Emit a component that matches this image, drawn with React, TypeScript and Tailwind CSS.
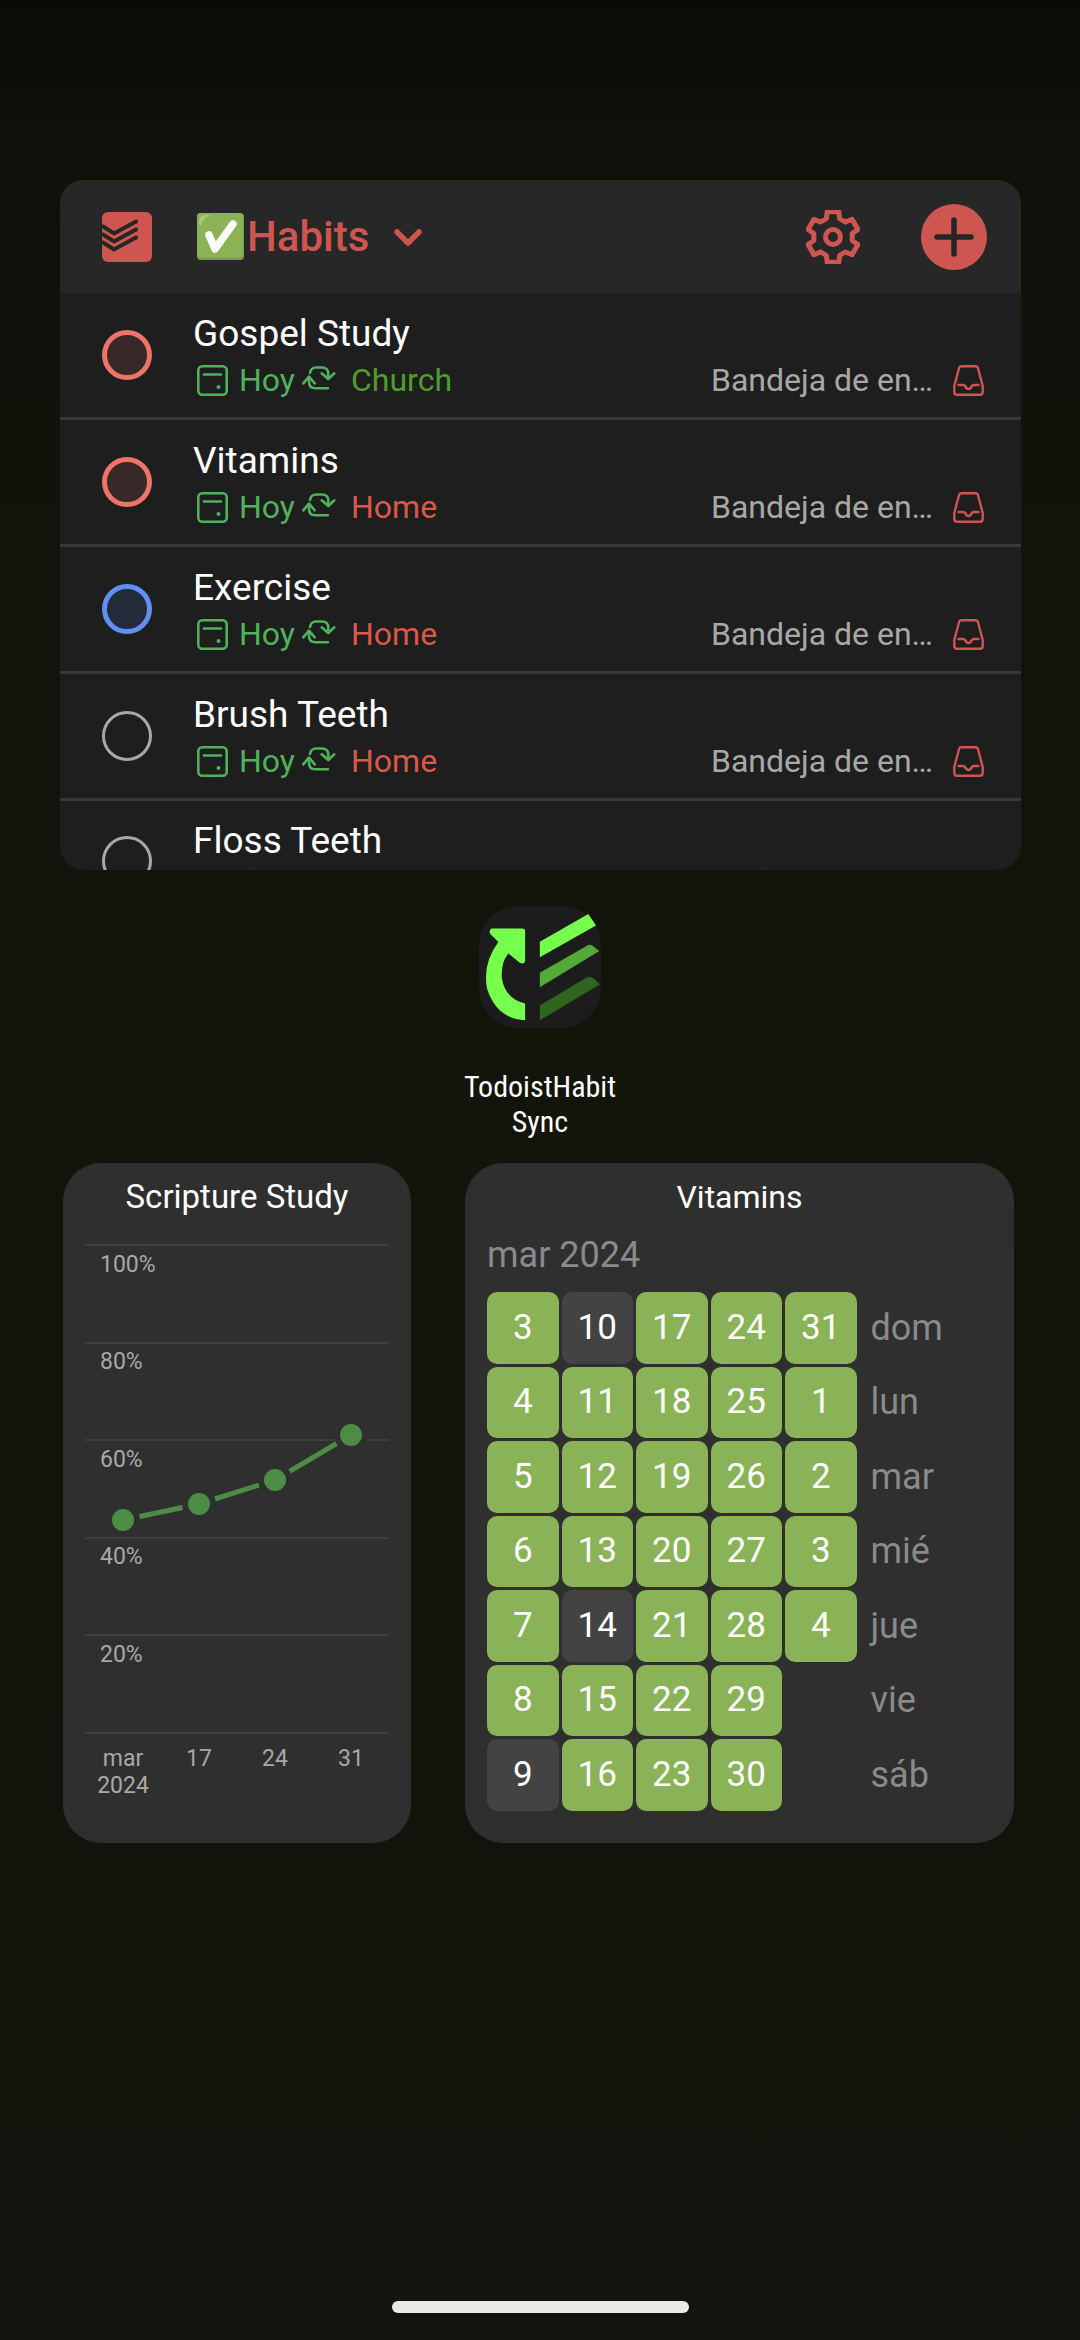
import React from "react";

const RED = "#cf5650";
const GREEN = "#4fb35b";

function gearPath() {
  const cx = 27, cy = 27, out = 26, root = 19.5;
  const pts: string[] = [];
  for (let i = 0; i < 6; i++) {
    const a = -90 + i * 60;
    const p = (ang: number, r: number) => {
      const t = (ang * Math.PI) / 180;
      return `${(cx + r * Math.cos(t)).toFixed(2)} ${(cy + r * Math.sin(t)).toFixed(2)}`;
    };
    pts.push(p(a - 20, root), p(a - 13, out), p(a + 13, out), p(a + 20, root));
  }
  return "M" + pts.join("L") + "Z";
}

function TodoistLogo() {
  return (
    <svg width="50" height="50" viewBox="0 0 50 50" className="shrink-0">
      <rect width="50" height="50" rx="6" fill={RED} />
      <g fill="none" stroke="#262626" strokeWidth="4" strokeLinecap="round">
        <path d="M1 14.5 L12 21.5 L34 9.5" />
        <path d="M1 22.5 L12 29.5 L34 17.5" />
        <path d="M1 30.5 L12 37.5 L34 25.5" />
      </g>
    </svg>
  );
}

function CheckEmoji() {
  return (
    <svg width="47" height="47" viewBox="0 0 47 47" className="shrink-0">
      <rect width="47" height="47" rx="4" fill="#7c9f4c" />
      <rect width="46" height="44.5" rx="4" fill="#8bb356" />
      <path d="M2 9 Q2 2 9 2 H14 Q6 4 3 14 Z" fill="#a9c985" />
      <path d="M12 22 L18 36 L36 11" fill="none" stroke="#fbfbfb" strokeWidth="7.5" strokeLinecap="round" strokeLinejoin="round" />
    </svg>
  );
}

function Gear() {
  return (
    <svg width="54" height="54" viewBox="0 0 54 54">
      <path d={gearPath()} fill="none" stroke={RED} strokeWidth="5" strokeLinejoin="round" />
      <circle cx="27" cy="27" r="7.5" fill="none" stroke={RED} strokeWidth="5" />
    </svg>
  );
}

function Plus() {
  return (
    <svg width="66" height="66" viewBox="0 0 66 66">
      <circle cx="33" cy="33" r="33" fill={RED} />
      <path d="M33 16 V50 M16 33 H50" stroke="#262626" strokeWidth="5.5" strokeLinecap="round" />
    </svg>
  );
}

function CalIcon() {
  return (
    <svg width="31" height="31" viewBox="0 0 31 31" className="shrink-0">
      <rect x="1.3" y="1.3" width="28.4" height="28.4" rx="4" fill="none" stroke={GREEN} strokeWidth="2.6" />
      <path d="M7 9.5 H24" stroke={GREEN} strokeWidth="2.6" strokeLinecap="round" />
      <circle cx="21.5" cy="22" r="2" fill={GREEN} />
    </svg>
  );
}

function RepeatIcon() {
  return (
    <svg width="34" height="25" viewBox="0 0 34 25" className="-mt-[3px] shrink-0">
      <g fill="none" stroke={GREEN} strokeWidth="2.6" strokeLinecap="round" strokeLinejoin="round">
        <path d="M1.3 17.3 L7 10.7 L12.7 17.3" />
        <path d="M7 11 V16 Q7 22.3 13.5 22.3 H26" />
        <path d="M19.7 7.3 L26.3 13 L32.3 7.3" />
        <path d="M8 7 Q9 1.5 14 1.5 H20 Q26.3 1.5 26.3 8 V12.5" />
      </g>
    </svg>
  );
}

function InboxIcon() {
  return (
    <svg width="31" height="31" viewBox="0 0 31 31" className="shrink-0">
      <path d="M8.5 1.3 H22.5 Q24.5 1.3 25 3.3 L29.7 21 V27 Q29.7 29.7 27 29.7 H4 Q1.3 29.7 1.3 27 V21 L6 3.3 Q6.5 1.3 8.5 1.3 Z" fill="none" stroke={RED} strokeWidth="2.4" strokeLinejoin="round" />
      <path d="M5.5 20 H10 Q11.5 20 12.5 21.5 Q13.5 24 15.5 24 Q17.5 24 18.5 21.5 Q19.5 20 21 20 H25.5" fill="none" stroke={RED} strokeWidth="2.4" strokeLinecap="round" />
    </svg>
  );
}

type Task = { name: string; tag: string; tagClass: string; ring: string };

const tasks: Task[] = [
  { name: "Gospel Study", tag: "Church", tagClass: "text-[#4f9e2d]", ring: "border-[#ee7368] border-[5px] bg-[#382828]" },
  { name: "Vitamins", tag: "Home", tagClass: "text-[#d9584a]", ring: "border-[#ee7368] border-[5px] bg-[#382828]" },
  { name: "Exercise", tag: "Home", tagClass: "text-[#d9584a]", ring: "border-[#5f90f2] border-[5px] bg-[#232b3a]" },
  { name: "Brush Teeth", tag: "Home", tagClass: "text-[#d9584a]", ring: "border-[#a8a8a8] border-[3px]" },
];

function TaskRow({ task }: { task: Task }) {
  return (
    <div className="flex h-[127px] shrink-0 items-center border-b-[3px] border-[#383838] pl-[42px] pr-[37px]">
      <div className={`h-[50px] w-[50px] shrink-0 rounded-full ${task.ring}`} />
      <div className="ml-[41px] flex min-w-0 flex-1 flex-col pt-[2px]">
        <div className="text-[37px] leading-[44px] text-white">{task.name}</div>
        <div className="mt-[4px] flex h-[40px] items-center text-[32px] leading-[40px]">
          <span className="ml-[4px]"><CalIcon /></span>
          <span className="ml-[11px] text-[#4fb35b]">Hoy</span>
          <span className="ml-[7px] flex items-center"><RepeatIcon /></span>
          <span className={`ml-[15px] ${task.tagClass}`}>{task.tag}</span>
          <span className="ml-auto text-[#a8a8a8]">Bandeja de en…</span>
          <span className="ml-[20px]"><InboxIcon /></span>
        </div>
      </div>
    </div>
  );
}

function TasksWidget() {
  return (
    <div className="ml-[60px] flex h-[690px] w-[961px] flex-col overflow-hidden rounded-[24px] bg-[#1e1e1e]">
      <div className="flex h-[113px] shrink-0 items-center bg-[#272727] pl-[42px] pr-[34px]">
        <TodoistLogo />
        <div className="ml-[45px]"><CheckEmoji /></div>
        <span className="ml-[3px] text-[42px] font-medium leading-[48px] text-[#cf5650]">Habits</span>
        <svg width="28" height="18" viewBox="0 0 28 18" className="ml-[25px] mt-[2px]">
          <path d="M3 3 L14 14 L25 3" fill="none" stroke={RED} strokeWidth="5.5" strokeLinecap="round" strokeLinejoin="round" />
        </svg>
        <div className="ml-auto"><Gear /></div>
        <div className="ml-[61px]"><Plus /></div>
      </div>
      {tasks.map((t) => <TaskRow key={t.name} task={t} />)}
      <div className="flex shrink-0 items-start pl-[42px] pt-[18px]">
        <div className="mt-[17px] h-[50px] w-[50px] shrink-0 rounded-full border-[3px] border-[#a8a8a8]" />
        <div className="ml-[41px] text-[37px] leading-[44px] text-white">Floss Teeth</div>
      </div>
    </div>
  );
}

function AppIcon() {
  return (
    <div className="mt-[36px] flex flex-col items-center">
      <svg width="122" height="122" viewBox="118 48 365 365">
        <rect x="118" y="48" width="365" height="365" rx="115" fill="#1c1c1c" />
        <path d="M156 115 H248 Q256 115 256 123 V212 Q254 224 240 218 L206 190 Q184 215 186 262 Q195 325 256 340 V390 Q170 385 142 295 Q128 220 176 156 L152 132 Q146 120 156 115 Z" fill="#76ff4d" />
        <path d="M300 155 L445 72 L468 106 L300 201 Z" fill="#76ff4d" />
        <path d="M300 248 L445 165 Q450 162 458 167 L478 183 L300 291 Z" fill="#52ab38" />
        <path d="M300 346 L440 262 Q448 258 458 263 L480 282 L300 390 Z" fill="#2f661e" />
      </svg>
      <div className="mt-[41px] w-[220px] text-center text-[30px] leading-[35px] text-white [font-stretch:75%]">
        TodoistHabit<br />Sync
      </div>
    </div>
  );
}

const pts: [number, number][] = [[123, 1520], [199, 1504], [275, 1480], [351, 1435]];

function ChartCard() {
  return (
    <div className="ml-[63px] flex h-[680px] w-[348px] flex-col rounded-[38px] bg-[#2f2f2f]">
      <div className="mt-[14px] text-center text-[33px] leading-[40px] text-white">Scripture Study</div>
      <svg width="348" height="610" viewBox="63 1225 348 610" className="mt-[8px]" fontFamily="Roboto, sans-serif" fontSize="23" fill="#a8a8a8">
        {[1245, 1343, 1440, 1538, 1635, 1733].map((y) => (
          <line key={y} x1="85" x2="389" y1={y} y2={y} stroke="#3e3e3e" strokeWidth="2" />
        ))}
        {[["100%", 1272], ["80%", 1369], ["60%", 1467], ["40%", 1564], ["20%", 1662]].map(([t, y]) => (
          <text key={t} x="100" y={y}>{t}</text>
        ))}
        <polyline points={pts.map((p) => p.join(",")).join(" ")} fill="none" stroke="#4c8c44" strokeWidth="5" />
        {pts.map(([x, y]) => <circle key={x} cx={x} cy={y} r="17" fill="#2f2f2f" />)}
        {pts.map(([x, y]) => <circle key={x} cx={x} cy={y} r="11" fill="#4c8c44" />)}
        <g textAnchor="middle">
          <text x="123" y="1766">mar</text>
          <text x="123" y="1793">2024</text>
          <text x="199" y="1766">17</text>
          <text x="275" y="1766">24</text>
          <text x="351" y="1766">31</text>
        </g>
      </svg>
    </div>
  );
}

const rows: { label: string; days: (number | null)[]; off: number[] }[] = [
  { label: "dom", days: [3, 10, 17, 24, 31], off: [10] },
  { label: "lun", days: [4, 11, 18, 25, 1], off: [] },
  { label: "mar", days: [5, 12, 19, 26, 2], off: [] },
  { label: "mié", days: [6, 13, 20, 27, 3], off: [] },
  { label: "jue", days: [7, 14, 21, 28, 4], off: [14] },
  { label: "vie", days: [8, 15, 22, 29, null], off: [] },
  { label: "sáb", days: [9, 16, 23, 30, null], off: [9] },
];

function CalendarCard() {
  return (
    <div className="ml-[54px] flex h-[680px] w-[549px] flex-col rounded-[38px] bg-[#2f2f2f] pl-[22px]">
      <div className="-ml-[22px] mt-[14px] text-center text-[32px] leading-[40px] text-white">Vitamins</div>
      <div className="mt-[16px] text-[36px] leading-[44px] text-[#8a8a8a]">mar 2024</div>
      <div className="mt-[15px] grid grid-cols-[repeat(5,71.5px)_auto] gap-[3px]">
        {rows.map((r) => (
          <React.Fragment key={r.label}>
            {r.days.map((d, i) =>
              d === null ? (
                <div key={i} />
              ) : (
                <div
                  key={i}
                  className={`flex h-[71.5px] items-center justify-center rounded-[10px] text-[35px] text-white ${r.off.includes(d) ? "bg-[#434343]" : "bg-[#8ab357]"}`}
                >
                  {d}
                </div>
              )
            )}
            <div className="flex items-center pl-[11px] text-[36px] text-[#8a8a8a]">{r.label}</div>
          </React.Fragment>
        ))}
      </div>
    </div>
  );
}

export default function App() {
  return (
    <div className="flex h-[2340px] w-[1080px] flex-col overflow-hidden bg-[linear-gradient(to_bottom,#0a0a07_0px,#10110a_130px,#13140a_1000px,#12130a_1900px,#14140e_2340px)] pt-[180px] [font-family:Roboto,'Liberation_Sans',sans-serif]">
      <TasksWidget />
      <AppIcon />
      <div className="mt-[24px] flex">
        <ChartCard />
        <CalendarCard />
      </div>
      <div className="mx-auto mt-[458px] h-[12px] w-[297px] rounded-full bg-[#e9e9e7]" />
    </div>
  );
}
